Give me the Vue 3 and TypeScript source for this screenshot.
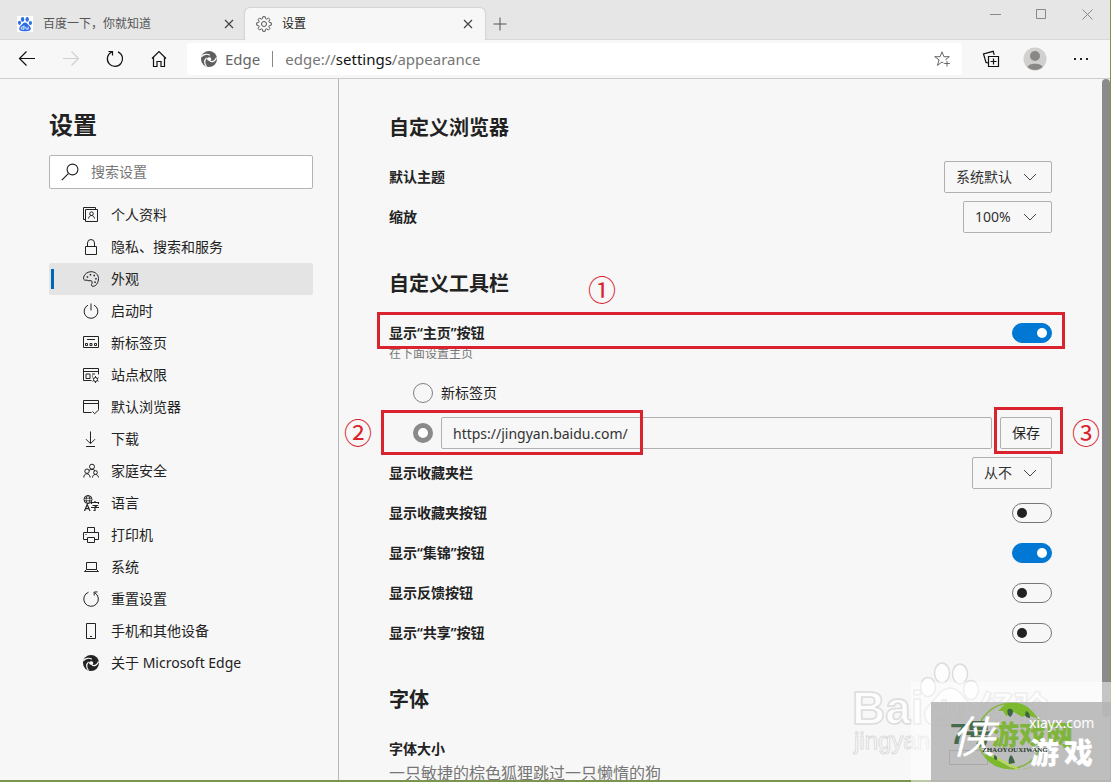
<script setup lang="ts">
import { ref } from 'vue'

interface NavItem {
  id: string
  label: string
}

interface ToggleRow {
  id: string
  label: string
}

const navItems: NavItem[] = [
  { id: 'profile', label: '个人资料' },
  { id: 'privacy', label: '隐私、搜索和服务' },
  { id: 'appearance', label: '外观' },
  { id: 'startup', label: '启动时' },
  { id: 'newtab', label: '新标签页' },
  { id: 'site', label: '站点权限' },
  { id: 'default', label: '默认浏览器' },
  { id: 'download', label: '下载' },
  { id: 'family', label: '家庭安全' },
  { id: 'language', label: '语言' },
  { id: 'printer', label: '打印机' },
  { id: 'system', label: '系统' },
  { id: 'reset', label: '重置设置' },
  { id: 'phone', label: '手机和其他设备' },
  { id: 'about', label: '关于 Microsoft Edge' },
]

const toggleRows: ToggleRow[] = [
  { id: 'favorites', label: '显示收藏夹按钮' },
  { id: 'collections', label: '显示“集锦”按钮' },
  { id: 'feedback', label: '显示反馈按钮' },
  { id: 'share', label: '显示“共享”按钮' },
]

const activeNav = ref('appearance')
const showHome = ref(true)
const homeTarget = ref('url')
const homeUrl = ref('https://jingyan.baidu.com/')
const toggles = ref<Record<string, boolean>>({
  favorites: false,
  collections: true,
  feedback: false,
  share: false,
})
const theme = ref('系统默认')
const zoom = ref('100%')
const favoritesBar = ref('从不')
</script>

<template>
  <div class="desktop">
    <div class="window">
      <header class="tabstrip">
        <div class="tab">
          <svg class="fav" width="16" height="16" viewBox="0 0 16 16">
            <rect width="16" height="16" fill="#fff" />
            <g fill="#2b6de5">
              <ellipse cx="5.6" cy="3.4" rx="1.7" ry="2.3" />
              <ellipse cx="10.2" cy="3.4" rx="1.7" ry="2.3" />
              <ellipse cx="2.5" cy="6.8" rx="1.6" ry="2.1" />
              <ellipse cx="13.4" cy="7" rx="1.6" ry="2.1" />
              <path d="M8 6.4c-1.8 0-2.5 1.6-3.7 2.8C3 10.300 1.900 11.300 2.300 13.300c.5 2.200 3.200 1.900 5.700 1.900s5.200.3 5.700-1.900c.4-2-.7-3-2-4.100C10.500 8 9.800 6.400 8 6.400z" />
            </g>
            <path d="M7 9.500v3.700H5.200a1.100 1.100 0 0 1 0-2.300H7M8.800 10.800v1.600q0 .8 1 .8h1.400v-2.500" fill="none" stroke="#fff" stroke-width=".9" />
          </svg>
          <span class="tab-title">百度一下，你就知道</span>
          <button class="tab-close" aria-label="关闭标签页">
            <svg width="10" height="10" viewBox="0 0 10 10"><path d="M1 1l8 8M9 1L1 9" /></svg>
          </button>
        </div>
        <div class="tab active">
          <svg class="fav" width="16" height="16" viewBox="0 0 16 16" fill="none" stroke="#555" stroke-width="1">
            <circle cx="8" cy="8" r="2.500" />
            <path d="M6.800.7h2.400l.4 2 1.100.5 1.700-1.200 1.600 1.600-1.200 1.700.5 1.100 2 .4v2.400l-2 .4-.5 1.100 1.200 1.700-1.600 1.600-1.700-1.200-1.100.5-.4 2H6.800l-.4-2-1.100-.5L3.600 14 2 12.400l1.200-1.700-.5-1.100-2-.4V6.800l2-.4.5-1.100L2 3.600 3.600 2l1.700 1.200 1.100-.5z" />
          </svg>
          <span class="tab-title">设置</span>
          <button class="tab-close" aria-label="关闭标签页">
            <svg width="10" height="10" viewBox="0 0 10 10"><path d="M1 1l8 8M9 1L1 9" /></svg>
          </button>
        </div>
        <button class="new-tab" aria-label="新建标签页">
          <svg width="14" height="14" viewBox="0 0 14 14"><path d="M7 .5v13M.5 7h13" stroke="#555" fill="none" /></svg>
        </button>
        <div class="win-controls">
          <button aria-label="最小化"><svg width="11" height="11" viewBox="0 0 11 11"><path d="M0 5.500h11" /></svg></button>
          <button aria-label="最大化"><svg width="11" height="11" viewBox="0 0 11 11"><path d="M.5.5h9v9h-9z" /></svg></button>
          <button aria-label="关闭"><svg width="11" height="11" viewBox="0 0 11 11"><path d="M.5.5l10 10M10.500.5l-10 10" /></svg></button>
        </div>
      </header>

      <div class="toolbar">
        <button aria-label="后退">
          <svg width="18" height="18" viewBox="0 0 18 18"><path d="M17 8.500H2M8.500 1.500l-7 7 7 7" stroke="#111" stroke-width="1.200" fill="none" /></svg>
        </button>
        <button aria-label="前进" disabled>
          <svg width="18" height="18" viewBox="0 0 18 18"><path d="M1 8.500h15M9.500 1.500l7 7-7 7" stroke="#cfcfcf" stroke-width="1.100" fill="none" /></svg>
        </button>
        <button aria-label="刷新">
          <svg width="18" height="18" viewBox="0 0 18 18"><path d="M12 1.900A7.600 7.600 0 1 1 5.700 2M2.500 1.500h4v4" stroke="#111" stroke-width="1.200" fill="none" /></svg>
        </button>
        <button aria-label="主页">
          <svg width="18" height="18" viewBox="0 0 18 18"><path d="M2 8.500l7-7 7 7M3.500 7.500v9h3.500v-5h4v5h3.500v-9" stroke="#111" stroke-width="1.200" fill="none" /></svg>
        </button>
        <div class="address">
          <svg width="16" height="16" viewBox="0 0 16 16">
            <circle cx="8" cy="8" r="8" fill="#5f5f5f" />
            <path d="M.3 5.800C2.500 3 6.500 2.500 8.800 4.300M15.500 6.500c-1 3.600-4 4.800-6.600 3.800M5.500 15.500C3.300 12.500 3.300 9 5.600 6.900" fill="none" stroke="#fff" stroke-width="1.200" />
            <path d="M6 7.600C7.200 5.800 10 6 10.200 8c.1 1-.5 1.500-.9 2-1.500.4-3.500-.6-3.300-2.400z" fill="#fff" />
          </svg>
          <span class="scheme">Edge</span>
          <span class="divider"></span>
          <span class="url">edge://<b>settings</b>/appearance</span>
          <button class="star" aria-label="添加到收藏夹">
            <svg width="17" height="17" viewBox="0 0 17 17" fill="none" stroke="#666">
              <path d="M9.500 12l-1.500-1-4.600 3.400 1.700-5.500L.7 5.700h5.400L8 .8l1.900 4.900h5.400l-3.400 2.600.3 1" />
              <path d="M13 10v5.500M10.200 12.500h5.600" />
            </svg>
          </button>
        </div>
        <button class="collections" aria-label="集锦">
          <svg width="18" height="18" viewBox="0 0 18 18" fill="none" stroke="#111" stroke-width="1.200">
            <path d="M6.500 6.500h10v10h-10zM11.500 8.500v6M8.500 11.500h6" />
            <path d="M6 13l-2-.6L1.500 4 11.200 1.300l1 3.500" />
          </svg>
        </button>
        <button aria-label="个人">
          <svg width="24" height="24" viewBox="0 0 24 24">
            <circle cx="12" cy="12" r="11.500" fill="#d2d0ce" />
            <circle cx="12" cy="9" r="5" fill="#8a8886" />
            <path d="M4.500 20c1-4.500 14-4.500 15 0-4 4-11 4-15 0z" fill="#8a8886" />
          </svg>
        </button>
        <button class="more" aria-label="设置及其他">
          <svg width="16" height="4" viewBox="0 0 16 4"><path d="M1 1h2v2H1zM7 1h2v2H7zM13 1h2v2h-2z" fill="#222" /></svg>
        </button>
      </div>

      <div class="body">
        <aside class="sidebar">
          <h1>设置</h1>
          <div class="search">
            <svg width="18" height="18" viewBox="0 0 18 18"><path d="M.8 17.200L7.300 10.700" stroke="#222" stroke-width="1.200" /><circle cx="11.500" cy="6.500" r="5.400" fill="none" stroke="#222" stroke-width="1.100" /></svg>
            <input type="text" placeholder="搜索设置" aria-label="搜索设置" />
          </div>
          <nav>
            <a
              v-for="item in navItems"
              :key="item.id"
              href="#"
              :class="{ current: item.id === activeNav }"
              @click.prevent="activeNav = item.id"
            >
              <svg width="16" height="16" viewBox="0 0 16 16" fill="none" stroke="#222" stroke-width="1">
                <g v-if="item.id === 'profile'"><path d="M2.500 2.500h12v12h-12zM2 12.500H.5V.5h12v1.500M5.500 11.500c.5-4 5.500-4 6 0" /><circle cx="8.500" cy="6.700" r="1.800" /></g>
                <path v-else-if="item.id === 'privacy'" d="M2.500 7.500h11v8h-11zM4.500 7.500V4a3.500 3.500 0 0 1 7 0v3.500" />
                <g v-else-if="item.id === 'appearance'">
                  <path d="M3 9.200c-2 .4-2.900-1.200-2.300-3.300C1.600 2.800 4.700.8 8.200.7c4.200 0 7.300 3 7.300 6.900s-2.500 7.700-5.300 7.700c-2.100 0-2.100-1.500-1.200-3 .8-1.600-.6-3.100-2-2.600-1.600.6-2.300-.9-4-.5z" />
                  <path d="M3.700 5.200h1.500v1.500H3.700zM6.700 3h1.500v1.500H6.700zM10.500 3.700H12v1.500h-1.500zM12.200 7h1.500v1.500h-1.500zM11.300 10.500h1.500V12h-1.500z" fill="#222" stroke="none" />
                </g>
                <path v-else-if="item.id === 'startup'" d="M8 .5v7M5 2.200a6.900 6.900 0 1 0 6 0" />
                <path v-else-if="item.id === 'newtab'" d="M.5 1.500h15v11H.5zM4 4.500h8M2.500 8.500h2v2h-2zM7 8.500h2v2H7zM11.500 8.500h2v2h-2z" />
                <g v-else-if="item.id === 'site'">
                  <path d="M8.500 13.500h-8v-12h15v6M.5 4.500h15M3 7h4v4.500H3zM9 7h3M9 9h1" />
                  <circle cx="12.500" cy="12.500" r="2" /><path d="M12.500 9v1.500M12.500 14.500V16M9.500 10.700l1.300.8M14.200 13.500l1.300.8M9.500 14.300l1.300-.8M14.200 11.500l1.300-.8" />
                </g>
                <path v-else-if="item.id === 'default'" d="M8.500 13.500h-8v-12h15v9M.5 4.500h15M9.500 12.500l2.200 2.200L16 10.500" />
                <path v-else-if="item.id === 'download'" d="M7.500.5v12M3 8.200l4.500 4.500L12 8.200M3 15.500h9" />
                <g v-else-if="item.id === 'family'">
                  <circle cx="9" cy="3.700" r="2.500" /><circle cx="4" cy="8.200" r="2.200" /><circle cx="12.500" cy="9.500" r="1.900" />
                  <path d="M.8 14.500c0-5 6-5 6.400 0M6 7.500c1-1.500 5-1.500 6 .2M9.500 14.500c0-4 5.800-4 6 0" />
                </g>
                <g v-else-if="item.id === 'language'">
                  <circle cx="5" cy="4.500" r="4" /><ellipse cx="5" cy="4.500" rx="1.800" ry="4" stroke-width=".8" /><path d="M1 3.200h8M1 5.800h8" stroke-width=".8" />
                  <path d="M1.500 16l2.700-6.500L7 16M2.500 13.700H6M8.500 9V7.500h7V9M9.500 10.500H14L12 12v3.500h-1.500M8 12.500h8M12 6v1.500" stroke-width="1.200" />
                </g>
                <path v-else-if="item.id === 'printer'" d="M4.500 5.500v-5h7v5M4.500 12.500h-4v-7h15v7h-4M4.500 10.500h7v5h-7zM2.500 7.500h1" />
                <path v-else-if="item.id === 'system'" d="M3.500 3.500h10v7h-10zM3.500 10.500l-2 2h14l-2-2" />
                <path v-else-if="item.id === 'reset'" d="M5.500 1.200a7.300 7.300 0 1 0 6.200.5M14.500.9l-3.500.2.300 3.400" />
                <path v-else-if="item.id === 'phone'" d="M3.500.5h9v15h-9zM7 13.500h2" />
                <g v-else stroke="none">
                  <circle cx="8" cy="8" r="8" fill="#222" />
                  <path d="M.3 5.800C2.500 3 6.500 2.500 8.800 4.300M15.500 6.500c-1 3.600-4 4.800-6.600 3.800M5.500 15.500C3.300 12.500 3.300 9 5.600 6.900" stroke="#f7f7f7" stroke-width="1.200" />
                  <path d="M6 7.600C7.200 5.800 10 6 10.200 8c.1 1-.5 1.500-.9 2-1.500.4-3.500-.6-3.300-2.400z" fill="#f7f7f7" />
                </g>
              </svg>
              <span>{{ item.label }}</span>
            </a>
          </nav>
        </aside>

        <main class="content">
          <section>
            <h2>自定义浏览器</h2>
            <div class="row">
              <label for="theme">默认主题</label>
              <div class="select wide">
                <select id="theme" v-model="theme"><option>系统默认</option></select>
                <svg width="14" height="8" viewBox="0 0 14 8"><path d="M1 1l6 6 6-6" /></svg>
              </div>
            </div>
            <div class="row">
              <label for="zoom">缩放</label>
              <div class="select medium">
                <select id="zoom" v-model="zoom"><option>100%</option></select>
                <svg width="14" height="8" viewBox="0 0 14 8"><path d="M1 1l6 6 6-6" /></svg>
              </div>
            </div>
          </section>

          <section>
            <h2>自定义工具栏</h2>
            <div class="row tall">
              <div>
                <label for="home">显示“主页”按钮</label>
                <p class="hint">在下面设置主页</p>
              </div>
              <input id="home" v-model="showHome" class="switch" type="checkbox" role="switch" />
              <span class="frame frame-home"></span>
              <span class="mark mark-one">①</span>
            </div>
            <div class="row radio-row">
              <input id="home-newtab" v-model="homeTarget" type="radio" name="home-target" value="newtab" />
              <label for="home-newtab" class="plain">新标签页</label>
            </div>
            <div class="row radio-row">
              <input v-model="homeTarget" type="radio" name="home-target" value="url" aria-label="网址" />
              <input v-model="homeUrl" class="url-input" type="text" aria-label="主页网址" />
              <button class="save">保存</button>
              <span class="frame frame-url"></span>
              <span class="frame frame-save"></span>
              <span class="mark mark-two">②</span>
              <span class="mark mark-three">③</span>
            </div>
            <div class="row">
              <label for="favbar">显示收藏夹栏</label>
              <div class="select small">
                <select id="favbar" v-model="favoritesBar"><option>从不</option></select>
                <svg width="14" height="8" viewBox="0 0 14 8"><path d="M1 1l6 6 6-6" /></svg>
              </div>
            </div>
            <div v-for="row in toggleRows" :key="row.id" class="row">
              <label :for="row.id">{{ row.label }}</label>
              <input :id="row.id" v-model="toggles[row.id]" class="switch" type="checkbox" role="switch" />
            </div>
          </section>

          <section>
            <h2>字体</h2>
            <div class="row tall">
              <div>
                <strong>字体大小</strong>
                <p class="sample">一只敏捷的棕色狐狸跳过一只懒惰的狗</p>
              </div>
            </div>
          </section>
        </main>
        <div class="scrollbar"><div class="thumb"></div></div>
      </div>
    </div>

    <svg class="watermark" width="271" height="132" viewBox="0 0 271 132">
      <g fill="#fdfdfd" stroke="#dcdcdc" stroke-width="1.500">
        <text x="12" y="74" class="wm-sans" font-size="46">Bai</text>
        <text x="14" y="99" class="wm-sans thin" font-size="24" stroke-width="1">jingyan</text>
        <text x="140" y="71" class="wm-cjk" font-size="34">经验</text>
        <ellipse cx="102" cy="23" rx="7.500" ry="10" />
        <ellipse cx="120" cy="24" rx="7.500" ry="10" />
        <ellipse cx="88" cy="37" rx="7.500" ry="9.500" />
        <ellipse cx="131" cy="40" rx="7.500" ry="9.500" />
        <path d="M110 38c-9 0-12 8-17 13-6 6-10 10-8 17 3 10 15 7 25 7s22 3 25-7c2-7-2-11-8-17-5-5-8-13-17-13z" />
        <text x="91" y="70" class="wm-sans" font-size="28">du</text>
      </g>
      <path d="M71 32h200v100H71z" fill="#fff" opacity=".5" />
      <path d="M91 52h180v80H91z" fill="#b3b3b3" opacity=".86" />
      <path d="M109.500 100.500h38v14h-38z" fill="none" stroke="#a8a8a8" />
      <circle cx="170" cy="86" r="32.500" fill="none" stroke="#83b536" stroke-width="1.300" />
      <path d="M158 61l7-7c9-3 20-1 26 6l5 8-9-3-5 2-8-5-8 4-3-5z" fill="#7db92c" />
      <path d="M144 104c10 2 21 12 33 16l16-3c-12 4-37 4-45-7z" fill="#7db92c" />
      <path d="M152 106l26 13" fill="none" stroke="#b4dc4d" stroke-width="2" />
      <path d="M168 59q4-1 5 2 0 4-3 6-4-3-2-8zM186 61q4 1 4 7-4 0-5-3zM170 106q2-3 5 7l-6 1q-1-4 1-8zM154 105q4 1 3 5-4 0-3-5z" fill="#3d6545" />
      <text x="110" y="94" class="wm-sans" font-size="30" fill="#47694d">7</text>
      <text x="125" y="94" class="wm-cjk" font-size="27" fill="#47694d">号</text>
      <text x="152" y="95" class="wm-cjk" font-size="27" fill="#7fb53b">游戏网</text>
      <text x="111" y="103" class="wm-brush" font-size="44" fill="#fff">侠</text>
      <text x="190" y="114" class="wm-cjk" font-size="29" fill="#fff">游</text>
      <text x="224" y="114" class="wm-cjk" font-size="29" fill="#fff">戏</text>
      <text x="189" y="78" class="wm-latin" font-size="14" fill="#fff">xiayx.com</text>
      <text x="142" y="102" class="wm-serif" font-size="7" fill="#26382a">ZHAOYOUXIWANG</text>
    </svg>
  </div>
</template>

<style>
body {
  margin: 0;
}
</style>

<style scoped>
.desktop,
.desktop * {
  box-sizing: border-box;
}
.desktop {
  position: relative;
  height: 100vh;
  padding: 0 1px 2px 0;
  overflow: hidden;
  background: #7b9551;
  color: #222;
  font: 14px/20px "Noto Sans", "Noto Sans CJK SC", sans-serif;
}
.window {
  display: flex;
  flex-direction: column;
  height: 100%;
  background: #f7f7f7;
}
button {
  display: flex;
  align-items: center;
  justify-content: center;
  padding: 0;
  border: 0;
  background: none;
  color: inherit;
  font: inherit;
}
p,
h1,
h2 {
  margin: 0;
}
.tabstrip {
  display: flex;
  flex: none;
  align-items: flex-end;
  height: 40px;
  background: #e6e6e6;
  box-shadow: inset 0 -1px #d9d9d9;
}
.tab {
  display: flex;
  align-items: center;
  width: 240px;
  height: 32px;
  padding: 0 11px;
  font-size: 12px;
}
.tab:first-child {
  width: 245px;
  padding: 0 10px 0 17px;
  color: #555;
}
.tab.active {
  border-radius: 5px 5px 0 0;
  background: #f7f7f7;
  box-shadow: 0 0 2px #aaa;
  clip-path: inset(-3px -3px 0);
}
.fav {
  margin-right: 10px;
}
.tab-title {
  flex: 1;
}
.tab-close {
  width: 12px;
  height: 16px;
}
.tab-close path {
  fill: none;
  stroke: #444;
  stroke-width: 1.2;
}
.new-tab {
  width: 30px;
  height: 32px;
}
.win-controls {
  display: flex;
  align-self: flex-start;
  margin-left: auto;
}
.win-controls button {
  width: 46px;
  height: 28px;
}
.win-controls path {
  fill: none;
  stroke: #888;
}
.toolbar {
  display: flex;
  flex: none;
  align-items: center;
  height: 39px;
  padding: 0 5px;
  border-bottom: 1px solid #cdcdcd;
}
.toolbar > button {
  width: 44px;
  height: 32px;
}
.toolbar > .more {
  width: 48px;
}
.address {
  display: flex;
  flex: 1;
  align-items: center;
  height: 32px;
  margin: 0 7px 0 6px;
  padding: 0 11px 0 14px;
  border-radius: 3px;
  background: #fff;
  color: #666;
  font-size: 15px;
}
.scheme {
  margin-left: 8px;
}
.divider {
  width: 1px;
  height: 16px;
  margin: 0 12px;
  background: #888;
}
.url {
  flex: 1;
  color: #767676;
}
.url b {
  color: #111;
  font-weight: 400;
}
.body {
  display: flex;
  flex: 1;
  min-height: 0;
}
.sidebar {
  flex: none;
  width: 339px;
  padding: 29px 25px 0 49px;
  border-right: 1px solid #b8b8b8;
}
h1 {
  font-size: 24px;
  line-height: 34px;
}
.search {
  display: flex;
  align-items: center;
  height: 34px;
  margin: 13px 0 10px;
  padding: 0 11px;
  border: 1px solid #b4b4b4;
  border-radius: 2px;
  background: #fff;
}
.search input {
  flex: 1;
  min-width: 0;
  margin-left: 12px;
  padding: 0;
  border: 0;
  outline: 0;
  background: none;
  font: inherit;
}
.search input::placeholder {
  color: #767676;
  opacity: 1;
}
nav a {
  display: flex;
  align-items: center;
  gap: 12px;
  height: 32px;
  padding-left: 34px;
  border-radius: 2px;
  color: #222;
  text-decoration: none;
}
nav a.current {
  position: relative;
  background: #e4e4e4;
}
nav a.current::before {
  position: absolute;
  top: 6px;
  bottom: 6px;
  left: 2px;
  width: 3px;
  background: #0067b8;
  content: "";
}
.content {
  flex: 1;
  min-width: 0;
  padding: 35px 50px 0;
  overflow: hidden;
}
section {
  margin-bottom: 33px;
}
h2 {
  margin-bottom: 15px;
  font-size: 20px;
  line-height: 28px;
}
.row {
  position: relative;
  display: flex;
  align-items: center;
  justify-content: space-between;
  height: 40px;
}
.row label,
.row strong {
  display: block;
  font-weight: 600;
}
.row .plain {
  font-weight: 400;
}
.row.tall {
  align-items: flex-start;
  height: auto;
  padding: 10px 0;
}
.hint,
.sample {
  margin-top: 2px;
  color: #767676;
  font-size: 12px;
  line-height: 18px;
}
.sample {
  font-size: 16px;
  line-height: 24px;
}
.radio-row {
  justify-content: flex-start;
  gap: 8px;
  padding-left: 24px;
}
input[type="radio"] {
  flex: none;
  width: 20px;
  height: 20px;
  margin: 0;
  border: 1px solid #808080;
  border-radius: 50%;
  appearance: none;
}
input[type="radio"]:checked {
  border: 5px solid #8a8a8a;
  background: #fff;
}
.url-input {
  flex: 1;
  min-width: 0;
  height: 32px;
  padding: 0 11px;
  border: 1px solid #b0b0b0;
  border-radius: 2px;
  background: none;
  color: #333;
  font: inherit;
}
.save {
  width: 52px;
  height: 32px;
  border: 1px solid #b0b0b0;
  border-radius: 2px;
}
.select {
  position: relative;
  height: 32px;
}
.wide {
  width: 108px;
}
.medium {
  width: 89px;
}
.small {
  width: 80px;
}
.select select {
  width: 100%;
  height: 100%;
  padding: 0 11px;
  border: 1px solid #b0b0b0;
  border-radius: 2px;
  background: none;
  color: #333;
  font: inherit;
  appearance: none;
}
.select svg {
  position: absolute;
  top: 12px;
  right: 15px;
  pointer-events: none;
}
.select path {
  fill: none;
  stroke: #444;
}
.switch {
  display: flex;
  flex: none;
  align-items: center;
  width: 40px;
  height: 20px;
  margin: 0;
  padding: 0 4px;
  border: 1px solid #767676;
  border-radius: 10px;
  appearance: none;
}
.switch::before {
  width: 10px;
  height: 10px;
  border-radius: 50%;
  background: #222;
  content: "";
}
.switch:checked {
  justify-content: flex-end;
  border-color: #0078d4;
  background: #0078d4;
}
.switch:checked::before {
  background: #fff;
}
.frame {
  position: absolute;
  border: 3px solid #d9232e;
  pointer-events: none;
}
.frame-home {
  top: -1px;
  right: -13px;
  left: -12px;
  height: 37px;
}
.frame-url {
  top: -3px;
  left: -8px;
  width: 262px;
  height: 45px;
}
.frame-save {
  top: -6px;
  right: -11px;
  width: 69px;
  height: 47px;
}
.mark {
  position: absolute;
  width: 28px;
  color: #d9232e;
  font: 400 28px/28px "Noto Sans CJK SC", sans-serif;
}
.mark-one {
  top: -38px;
  left: 199px;
}
.mark-two {
  top: 5px;
  left: -45px;
}
.mark-three {
  top: 5px;
  right: -48px;
}
.scrollbar {
  flex: none;
  width: 8px;
}
.thumb {
  height: 91%;
  border-radius: 4px;
  background: #8b8b8b;
}
.watermark {
  position: absolute;
  right: 0;
  bottom: 0;
  pointer-events: none;
}
.wm-sans {
  font-family: "Liberation Sans", sans-serif;
  font-weight: 700;
}
.wm-sans.thin {
  font-weight: 400;
}
.wm-cjk {
  font-family: "Noto Sans CJK SC", sans-serif;
  font-weight: 900;
}
.wm-brush {
  font-family: "Noto Sans CJK SC", sans-serif;
  font-style: italic;
  font-weight: 400;
}
.wm-latin {
  font-family: "Noto Sans", sans-serif;
}
.wm-serif {
  font-family: "Liberation Serif", serif;
  font-weight: 700;
}
</style>
